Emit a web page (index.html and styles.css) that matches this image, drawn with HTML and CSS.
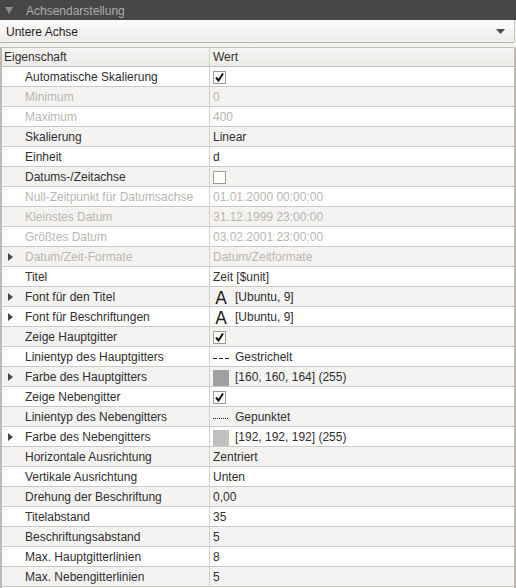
FILE: index.html
```html
<!DOCTYPE html>
<html lang="de">
<head>
<meta charset="utf-8">
<title>Achsendarstellung</title>
<link rel="stylesheet" href="styles.css">
</head>
<body>
<div class="panel">
  <div class="titlebar">
    <svg class="tb-tri" width="8" height="7" viewBox="0 0 8 7"><path d="M0 0 H8 L4 7 Z" fill="#8e8e8e"/></svg>
    <span class="tb-text">Achsendarstellung</span>
  </div>
  <div class="combo">
    <span class="combo-text">Untere Achse</span>
    <svg class="combo-arrow" width="9" height="5" viewBox="0 0 9 5"><path d="M0 0 H9 L4.5 5 Z" fill="#4a4a4a"/></svg>
  </div>
  <div class="gap"></div>
  <div class="tree">
    <div class="row header"><div class="c1">Eigenschaft</div><div class="c2">Wert</div></div>

    <div class="row"><div class="c1">Automatische Skalierung</div><div class="c2"><span class="cb"><svg width="11" height="11" viewBox="0 0 11 11"><path d="M2 5.5 L4.5 8.5 L9 1.5" fill="none" stroke="#111" stroke-width="2"/></svg></span></div></div>
    <div class="row alt dis"><div class="c1">Minimum</div><div class="c2">0</div></div>
    <div class="row dis"><div class="c1">Maximum</div><div class="c2">400</div></div>
    <div class="row alt"><div class="c1">Skalierung</div><div class="c2">Linear</div></div>
    <div class="row"><div class="c1">Einheit</div><div class="c2">d</div></div>
    <div class="row alt"><div class="c1">Datums-/Zeitachse</div><div class="c2"><span class="cb"></span></div></div>
    <div class="row dis"><div class="c1">Null-Zeitpunkt für Datumsachse</div><div class="c2">01.01.2000 00:00:00</div></div>
    <div class="row alt dis"><div class="c1">Kleinstes Datum</div><div class="c2">31.12.1999 23:00:00</div></div>
    <div class="row dis"><div class="c1">Größtes Datum</div><div class="c2">03.02.2001 23:00:00</div></div>
    <div class="row alt dis"><div class="c1"><span class="exp"></span>Datum/Zeit-Formate</div><div class="c2">Datum/Zeitformate</div></div>
    <div class="row"><div class="c1">Titel</div><div class="c2">Zeit [$unit]</div></div>
    <div class="row alt"><div class="c1"><span class="exp"></span>Font für den Titel</div><div class="c2"><span class="icon glyph">A</span>[Ubuntu, 9]</div></div>
    <div class="row"><div class="c1"><span class="exp"></span>Font für Beschriftungen</div><div class="c2"><span class="icon glyph">A</span>[Ubuntu, 9]</div></div>
    <div class="row alt"><div class="c1">Zeige Hauptgitter</div><div class="c2"><span class="cb"><svg width="11" height="11" viewBox="0 0 11 11"><path d="M2 5.5 L4.5 8.5 L9 1.5" fill="none" stroke="#111" stroke-width="2"/></svg></span></div></div>
    <div class="row"><div class="c1">Linientyp des Hauptgitters</div><div class="c2"><svg class="icon" width="16" height="16" viewBox="0 0 16 16"><line x1="0" y1="8.5" x2="16" y2="8.5" stroke="#222" stroke-width="1" stroke-dasharray="4 2"/></svg>Gestrichelt</div></div>
    <div class="row alt"><div class="c1"><span class="exp"></span>Farbe des Hauptgitters</div><div class="c2"><span class="icon swatch s1"></span>[160, 160, 164] (255)</div></div>
    <div class="row"><div class="c1">Zeige Nebengitter</div><div class="c2"><span class="cb"><svg width="11" height="11" viewBox="0 0 11 11"><path d="M2 5.5 L4.5 8.5 L9 1.5" fill="none" stroke="#111" stroke-width="2"/></svg></span></div></div>
    <div class="row alt"><div class="c1">Linientyp des Nebengitters</div><div class="c2"><svg class="icon" width="16" height="16" viewBox="0 0 16 16"><line x1="0" y1="8.5" x2="16" y2="8.5" stroke="#222" stroke-width="1" stroke-dasharray="1 1"/></svg>Gepunktet</div></div>
    <div class="row"><div class="c1"><span class="exp"></span>Farbe des Nebengitters</div><div class="c2"><span class="icon swatch s2"></span>[192, 192, 192] (255)</div></div>
    <div class="row alt"><div class="c1">Horizontale Ausrichtung</div><div class="c2">Zentriert</div></div>
    <div class="row"><div class="c1">Vertikale Ausrichtung</div><div class="c2">Unten</div></div>
    <div class="row alt"><div class="c1">Drehung der Beschriftung</div><div class="c2">0,00</div></div>
    <div class="row"><div class="c1">Titelabstand</div><div class="c2">35</div></div>
    <div class="row alt"><div class="c1">Beschriftungsabstand</div><div class="c2">5</div></div>
    <div class="row"><div class="c1">Max. Hauptgitterlinien</div><div class="c2">8</div></div>
    <div class="row alt"><div class="c1">Max. Nebengitterlinien</div><div class="c2">5</div></div>
  </div>
</div>
</body>
</html>
```

FILE: styles.css
```css
html, body {
  margin: 0;
  padding: 0;
  background: #f2f1f0;
}
body {
  font-family: "Liberation Sans", Arial, sans-serif;
  font-size: 12px;
  color: #2f2f2f;
}
.panel {
  width: 516px;
  height: 588px;
  overflow: hidden;
  display: flex;
  flex-direction: column;
}
.titlebar {
  height: 20px;
  box-sizing: border-box;
  padding-top: 1px;
  flex: none;
  background: #474747;
  display: flex;
  align-items: center;
}
.tb-tri {
  margin-left: 5px;
  margin-right: 13px;
  margin-top: -1px;
}
.tb-text {
  color: #acacac;
}
.combo {
  height: 22px;
  box-sizing: border-box;
  padding-top: 1px;
  flex: none;
  margin-right: 1px;
  border-bottom: 1px solid #b9b5b0;
  border-right: 1px solid #c9c5c0;
  border-bottom-right-radius: 2px;
  background: linear-gradient(#fcfcfc, #eeece9);
  display: flex;
  align-items: center;
  padding-left: 6px;
  padding-right: 9px;
  height: 23px;
}
.combo-text {
  flex: 1;
  color: #1f1f1f;
}
.combo-arrow {
  margin-top: -1px;
}
.gap {
  height: 4px;
  flex: none;
}
.tree {
  flex: 1;
  border-top: 1px solid #c4c0bb;
  border-left: 2px solid #bdb9b4;
  border-right: 2px solid #bdb9b4;
  background: #fff;
}
.row {
  display: grid;
  grid-template-columns: 208px 1fr;
  height: 19px;
  border-bottom: 1px solid #cdc9c4;
  background: #ffffff;
  white-space: nowrap;
}
.row.alt {
  background: #f4f3f1;
}
.row.header {
  height: 18px;
  background: linear-gradient(#f6f5f3, #eeece9);
  border-bottom: 1px solid #c4c0bb;
}
.c1, .c2 {
  box-sizing: border-box;
  padding-top: 2px;
  line-height: 17px;
  height: 19px;
  overflow: hidden;
}
.header .c1, .header .c2 {
  height: 18px;
  padding-top: 1px;
}
.c1 {
  border-right: 1px solid #d3cfca;
  padding-left: 23px;
  position: relative;
}
.header .c1 {
  padding-left: 2px;
  border-right-color: #d6d2cd;
}
.c2 {
  padding-left: 3px;
  display: flex;
  align-items: center;
}
.dis {
  color: #b9b6b2;
}
.exp {
  position: absolute;
  left: 6px;
  top: 6px;
  width: 0;
  height: 0;
  border-top: 4px solid transparent;
  border-bottom: 4px solid transparent;
  border-left: 5px solid #4a4a4a;
}
.cb {
  width: 13px;
  height: 13px;
  box-sizing: border-box;
  border: 1px solid #9d9993;
  background: #fff;
  display: flex;
  align-items: center;
  justify-content: center;
}
.cb svg {
  display: block;
}
.icon {
  width: 16px;
  height: 16px;
  margin-right: 6px;
  flex: none;
  display: block;
}
.glyph {
  font-size: 17px;
  line-height: 16px;
  text-align: center;
  color: #1a1a1a;
  font-family: "DejaVu Sans", sans-serif;
}
.swatch.s1 {
  background: #a0a0a4;
}
.swatch.s2 {
  background: #c0c0c0;
}
```
